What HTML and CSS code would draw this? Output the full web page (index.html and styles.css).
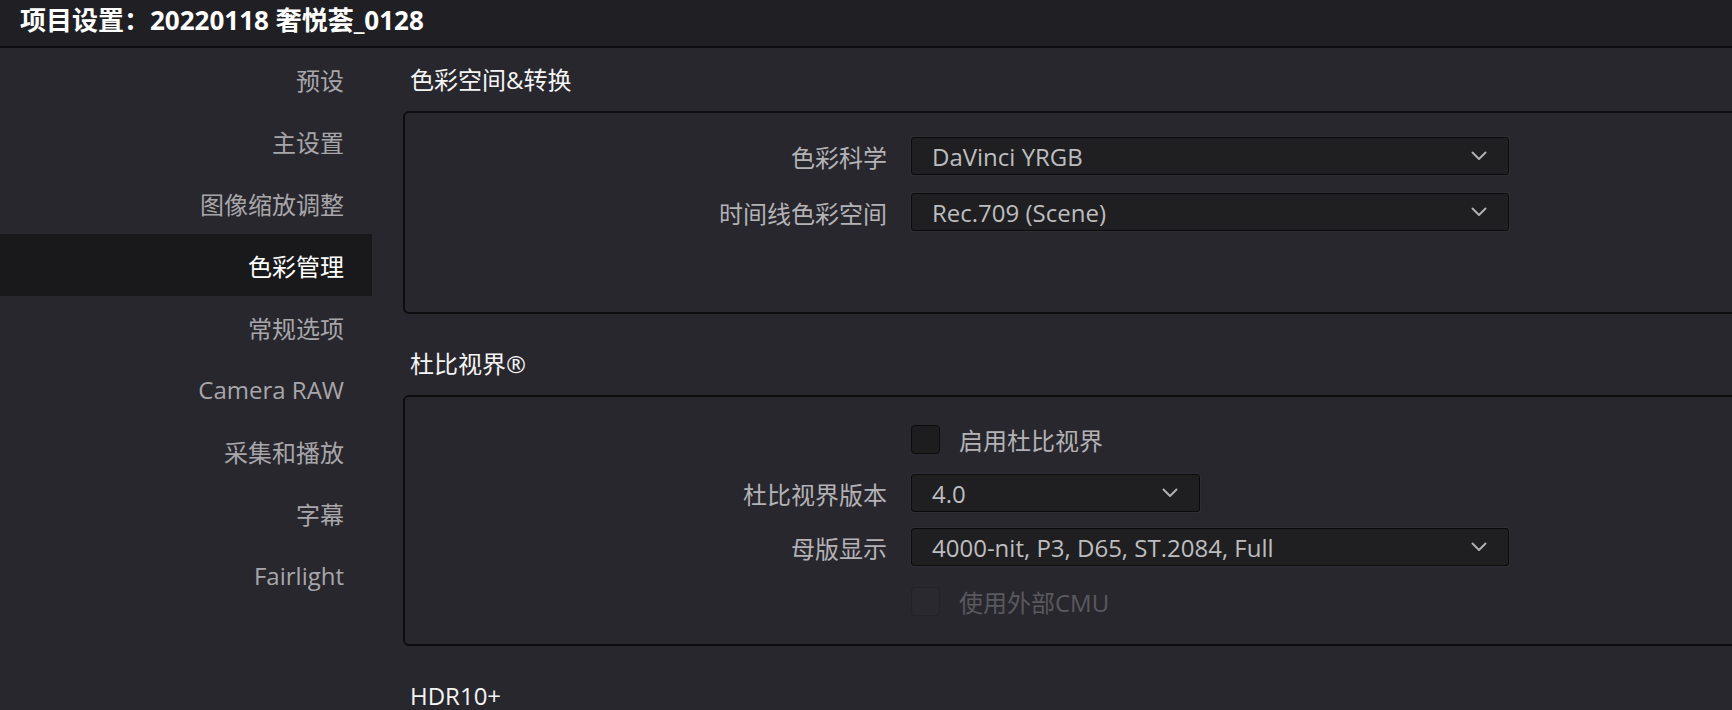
FILE: index.html
```html
<!DOCTYPE html>
<html lang="zh-CN">
<head>
<meta charset="utf-8">
<title>项目设置</title>
<link rel="stylesheet" href="styles.css">
</head>
<body>
<div class="window">
  <header class="titlebar">项目设置：20220118 奢悦荟_0128</header>
  <div class="layout">
    <nav class="sidebar">
      <div class="nav-item">预设</div>
      <div class="nav-item">主设置</div>
      <div class="nav-item">图像缩放调整</div>
      <div class="nav-item active">色彩管理</div>
      <div class="nav-item">常规选项</div>
      <div class="nav-item">Camera RAW</div>
      <div class="nav-item">采集和播放</div>
      <div class="nav-item">字幕</div>
      <div class="nav-item">Fairlight</div>
    </nav>
    <main class="content">
      <section class="group">
        <h2 class="group-title">色彩空间&amp;转换</h2>
        <div class="panel panel-color">
          <div class="row">
            <span class="label">色彩科学</span>
            <div class="select wide"><span class="select-value">DaVinci YRGB</span><svg class="chev" viewBox="0 0 16 10" width="16" height="10"><polyline points="1.5,1.5 8,8 14.5,1.5"/></svg></div>
          </div>
          <div class="row">
            <span class="label">时间线色彩空间</span>
            <div class="select wide"><span class="select-value">Rec.709 (Scene)</span><svg class="chev" viewBox="0 0 16 10" width="16" height="10"><polyline points="1.5,1.5 8,8 14.5,1.5"/></svg></div>
          </div>
        </div>
      </section>
      <section class="group">
        <h2 class="group-title">杜比视界®</h2>
        <div class="panel panel-dolby">
          <div class="row">
            <span class="label"></span>
            <label class="check"><span class="box"></span><span class="check-text">启用杜比视界</span></label>
          </div>
          <div class="row">
            <span class="label">杜比视界版本</span>
            <div class="select narrow"><span class="select-value">4.0</span><svg class="chev" viewBox="0 0 16 10" width="16" height="10"><polyline points="1.5,1.5 8,8 14.5,1.5"/></svg></div>
          </div>
          <div class="row">
            <span class="label">母版显示</span>
            <div class="select wide"><span class="select-value">4000-nit, P3, D65, ST.2084, Full</span><svg class="chev" viewBox="0 0 16 10" width="16" height="10"><polyline points="1.5,1.5 8,8 14.5,1.5"/></svg></div>
          </div>
          <div class="row">
            <span class="label"></span>
            <label class="check disabled"><span class="box"></span><span class="check-text">使用外部CMU</span></label>
          </div>
        </div>
      </section>
      <section class="group">
        <h2 class="group-title">HDR10+</h2>
      </section>
    </main>
  </div>
</div>
</body>
</html>
```

FILE: styles.css
```css
html, body {
  margin: 0;
  padding: 0;
  background: #28272d;
  overflow: hidden;
}

body {
  font-family: "Open Sans", "Noto Sans CJK SC", sans-serif;
  font-size: 24px;
  color: #b4b4b6;
}

.window {
  width: 1732px;
  height: 710px;
  overflow: hidden;
  display: flex;
  flex-direction: column;
}

.titlebar {
  height: 46px;
  flex: none;
  background: #201f24;
  border-bottom: 2px solid #0e0e10;
  color: #ffffff;
  font-size: 26px;
  font-weight: 700;
  line-height: 40px;
  padding-left: 20px;
  white-space: nowrap;
}

.layout {
  flex: 1;
  display: flex;
  min-height: 0;
}

.sidebar {
  width: 372px;
  flex: none;
  display: flex;
  flex-direction: column;
}

.nav-item {
  height: 62px;
  display: flex;
  align-items: center;
  justify-content: flex-end;
  padding-right: 28px;
  color: #a7a6aa;
  white-space: nowrap;
}

.nav-item.active {
  background: #19191b;
  color: #ffffff;
}

.content {
  flex: 1;
  padding: 16px 0 0 31px;
  display: flex;
  flex-direction: column;
  min-width: 0;
}

.group {
  margin-bottom: 34px;
}

.group-title {
  margin: 0 0 15px 7px;
  font-size: 24px;
  font-weight: 400;
  line-height: 32px;
  color: #f4f4f5;
  white-space: nowrap;
}

.panel {
  width: 1400px;
  border: 2px solid #0d0d0f;
  border-radius: 6px;
  display: flex;
  flex-direction: column;
}

.panel-color {
  padding: 24px 0 81px;
  gap: 18px;
}

.panel-dolby {
  padding: 23px 0 24px;
  gap: 16px;
}

.row {
  display: grid;
  grid-template-columns: 482px 1fr;
  column-gap: 24px;
  align-items: center;
  height: 38px;
}

.label {
  text-align: right;
  color: #b3b2b6;
  white-space: nowrap;
}

.select {
  height: 38px;
  box-sizing: border-box;
  background: #1f1f21;
  border: 1px solid #0b0b0c;
  border-radius: 3px;
  box-shadow: 0 0 0 1px rgba(255, 255, 255, 0.03);
  display: flex;
  align-items: center;
  justify-content: space-between;
  padding: 0 21px 0 20px;
}

.select.wide {
  width: 598px;
}

.select.narrow {
  width: 289px;
}

.select-value {
  color: #bdbdbf;
  white-space: nowrap;
}

.chev {
  flex: none;
  fill: none;
  stroke: #b0b0b2;
  stroke-width: 2;
  stroke-linecap: round;
  stroke-linejoin: round;
}

.check {
  display: flex;
  align-items: center;
  gap: 19px;
}

.box {
  width: 29px;
  height: 29px;
  box-sizing: border-box;
  background: #1d1d1f;
  border: 1px solid #0c0c0d;
  border-radius: 4px;
}

.check-text {
  color: #b3b2b6;
  white-space: nowrap;
}

.check.disabled .box {
  background: #2a292f;
  border-color: #232227;
}

.check.disabled .check-text {
  color: #5a595e;
}
```
